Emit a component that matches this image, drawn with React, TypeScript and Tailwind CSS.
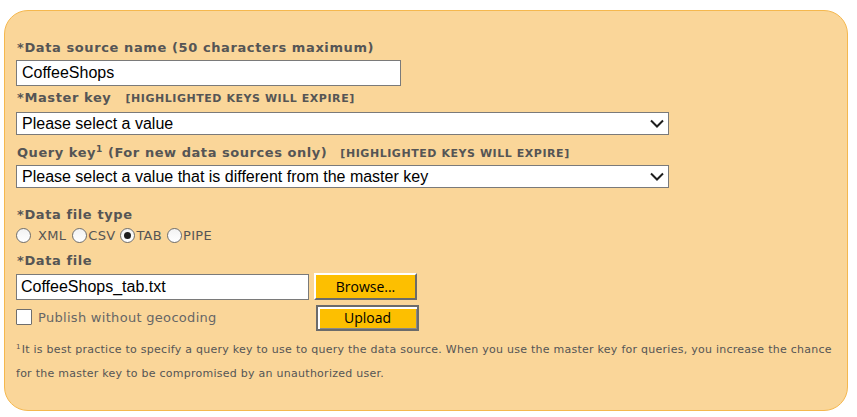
import React from "react";

const V = { fontFamily: '"DejaVu Sans", Verdana, sans-serif' };
const A = { fontFamily: '"Liberation Sans", Arial, sans-serif' };
const O = { fontFamily: '"Open Sans", sans-serif' };

function Chevron() {
  return (
    <svg width="14" height="9" viewBox="0 0 14 9" className="absolute right-[4px] top-[6px]">
      <polyline points="1,1.5 7,7.5 13,1.5" fill="none" stroke="#1e1e1e" strokeWidth="2" />
    </svg>
  );
}

function Select({ text }: { text: string }) {
  return (
    <div className="relative w-[653px] h-[23px] bg-white border border-[#7a7a7a] flex items-center pl-[5px] text-[16px] text-black leading-none" style={A}>
      {text}
      <Chevron />
    </div>
  );
}

function Radio({ checked }: { checked?: boolean }) {
  return (
    <span className="inline-flex w-[15px] h-[15px] rounded-full border border-[#6e6e6e] bg-gradient-to-b from-[#f2f2f2] to-white items-center justify-center shrink-0">
      {checked && <span className="w-[7px] h-[7px] rounded-full bg-[#1e1e1e]" />}
    </span>
  );
}

export default function App() {
  return (
    <div className="w-[857px] h-[417px] bg-white pt-[10px] pl-[4px]">
      <div className="w-[844px] h-[401px] rounded-[24px] border border-[#F5B84E] bg-[#FAD699] pl-[11px] pt-[29px] text-[#555555]">
        <div className="h-[16px] text-[13px] font-bold leading-[16px] tracking-[0.6px] pl-[1px]" style={V}>*Data source name (50 characters maximum)</div>
        <div className="mt-[4px] w-[385px] h-[26px] bg-white border border-[#7a7a7a] flex items-center pl-[5px] text-[16px] text-black leading-none" style={A}>CoffeeShops</div>

        <div className="mt-[4px] h-[16px] flex items-baseline leading-[16px] pl-[1px]" style={V}>
          <span className="text-[13px] font-bold tracking-[0.6px]">*Master key</span>
          <span className="ml-[14px] text-[11px] font-bold tracking-[0.55px]">[HIGHLIGHTED KEYS WILL EXPIRE]</span>
        </div>
        <div className="mt-[6px]"><Select text="Please select a value" /></div>

        <div className="mt-[10px] h-[16px] flex items-baseline leading-[16px] pl-[1px]" style={V}>
          <span className="text-[13px] font-bold tracking-[0.55px]">
            Query key<span className="relative -top-[5px] text-[9px] leading-none">1</span> (For new data sources only)
          </span>
          <span className="ml-[13px] text-[11px] font-bold tracking-[0.55px]">[HIGHLIGHTED KEYS WILL EXPIRE]</span>
        </div>
        <div className="mt-[4px]"><Select text="Please select a value that is different from the master key" /></div>

        <div className="mt-[19px] h-[16px] text-[13px] font-bold leading-[16px] tracking-[0.6px] pl-[1px]" style={V}>*Data file type</div>
        <div className="mt-[3px] flex items-center h-[18px] text-[13px] leading-none tracking-[0.3px]" style={V}>
          <Radio />
          <span className="ml-[7px]">XML</span>
          <span className="ml-[6px] flex"><Radio /></span>
          <span className="ml-[1px]">CSV</span>
          <span className="ml-[5px] flex"><Radio checked /></span>
          <span className="ml-[1px]">TAB</span>
          <span className="ml-[5px] flex"><Radio /></span>
          <span className="ml-[1px]">PIPE</span>
        </div>

        <div className="mt-[9px] h-[16px] text-[13px] font-bold leading-[16px] tracking-[0.6px] pl-[1px]" style={V}>*Data file</div>
        <div className="mt-[4px] flex items-start h-[27px]">
          <div className="mt-[1px] w-[293px] h-[26px] bg-white border border-[#7a7a7a] flex items-center pl-[4px] text-[16px] text-black leading-none" style={A}>CoffeeShops_tab.txt</div>
          <div className="ml-[5px] w-[103px] h-[27px] bg-[#FDBF00] border-2 border-t-white border-l-white border-r-[#6b6b6b] border-b-[#6b6b6b] flex items-center justify-center text-[14px] text-black leading-none" style={O}>Browse...</div>
        </div>
        <div className="flex items-start h-[31px]">
          <div className="w-[300px] mt-[9px] flex items-center h-[16px]">
            <span className="w-[16px] h-[16px] bg-white border border-[#6e6e6e] rounded-[1px] shrink-0" />
            <span className="ml-[6px] text-[13px] leading-none text-[#666666] tracking-[0.3px]" style={V}>Publish without geocoding</span>
          </div>
          <div className="mt-[5px] w-[103px] h-[26px] border-2 border-[#6b6b6b] bg-[#FDBF00] shadow-[inset_2px_2px_0_#ffffff,inset_-1px_-1px_0_#8a8a8a] flex items-center justify-center text-[14px] text-black leading-none" style={O}>Upload</div>
        </div>

        <div className="mt-[7px] text-[11px] leading-[24px] pr-[6px] tracking-[0.26px] text-[#555555]" style={V}>
          <span className="relative -top-[4px] text-[7px] leading-none pr-[1px]">1</span>It is best practice to specify a query key to use to query the data source. When you use the master key for queries, you increase the chance for the master key to be compromised by an unauthorized user.
        </div>
      </div>
    </div>
  );
}
